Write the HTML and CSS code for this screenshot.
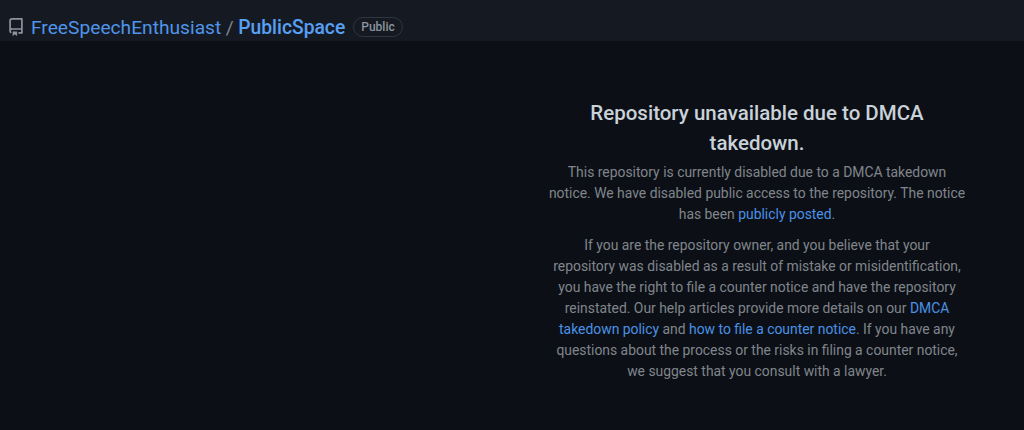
FILE: index.html
```html
<!DOCTYPE html>
<html lang="en">
<head>
<meta charset="utf-8">
<title>PublicSpace</title>
<link rel="stylesheet" href="styles.css">
</head>
<body>
<header class="repo-head">
<svg class="repo-icon" viewBox="0 0 16 16" width="18" height="18" aria-hidden="true"><path d="M2 2.5A2.5 2.5 0 0 1 4.5 0h8.75a.75.75 0 0 1 .75.75v12.5a.75.75 0 0 1-.75.75h-2.5a.75.75 0 0 1 0-1.5h1.75v-2h-8a1 1 0 0 0-.714 1.7.75.75 0 1 1-1.072 1.05A2.495 2.495 0 0 1 2 11.5Zm10.5-1h-8a1 1 0 0 0-1 1v6.708A2.486 2.486 0 0 1 4.5 9h8ZM5 12.25a.25.25 0 0 1 .25-.25h3.5a.25.25 0 0 1 .25.25v3.25a.25.25 0 0 1-.4.2l-1.45-1.087a.249.249 0 0 0-.3 0L5.4 15.7a.25.25 0 0 1-.4-.2Z"/></svg>
<a class="owner" href="#">FreeSpeechEnthusiast</a>
<span class="sep">/</span>
<a class="name" href="#">PublicSpace</a>
<span class="badge">Public</span>
</header>
<main class="page">
<section class="notice">
<h1>Repository unavailable due to DMCA takedown.</h1>
<p>This repository is currently disabled due to a DMCA takedown notice. We have disabled public access to the repository. The notice has been <a href="#">publicly posted</a>.</p>
<p>If you are the repository owner, and you believe that your<br>repository was disabled as a result of mistake or misidentification, you have the right to file a counter notice and have the repository reinstated. Our help articles provide more details on our <a href="#">DMCA takedown policy</a> and <a href="#">how to file a counter notice</a>. If you have any questions about the process or the risks in filing a counter notice, we suggest that you consult with a lawyer.</p>
</section>
</main>
</body>
</html>
```
FILE: styles.css
```css
html, body {
  margin: 0;
  height: 100%;
  background: #0c1016;
  font-family: Roboto, "Open Sans", "Liberation Sans", sans-serif;
  overflow: hidden;
}
a { text-decoration: none; color: #4a90e6; }
.repo-head {
  height: 41px;
  background: #151a22;
  display: flex;
  align-items: center;
  padding: 13px 0 0 7px;
  box-sizing: border-box;
}
.repo-icon { fill: #8b949e; margin-right: 6px; }
.owner { font-size: 19.2px; color: #4f94ea; }
.sep { font-size: 19.2px; color: #7d8590; margin: 0 4.5px; }
.name { font-size: 19.3px; font-weight: 500; color: #58a0f5; }
.badge {
  margin-left: 8px;
  font-size: 12px;
  font-weight: 500;
  line-height: 18px;
  padding: 0 7px;
  border: 1px solid #30363d;
  border-radius: 10px;
  color: #8b949e;
}
.page {
  padding: 57px 0 0 546px;
}
.notice {
  width: 422px;
  text-align: center;
  color: #80858c;
  font-size: 13.9px;
  line-height: 21px;
}
.notice h1 {
  margin: 0 0 4px;
  font-size: 20.5px;
  line-height: 30px;
  font-weight: 500;
  color: #c9d1d9;
}
.notice p { margin: 0 0 10px; }
```
